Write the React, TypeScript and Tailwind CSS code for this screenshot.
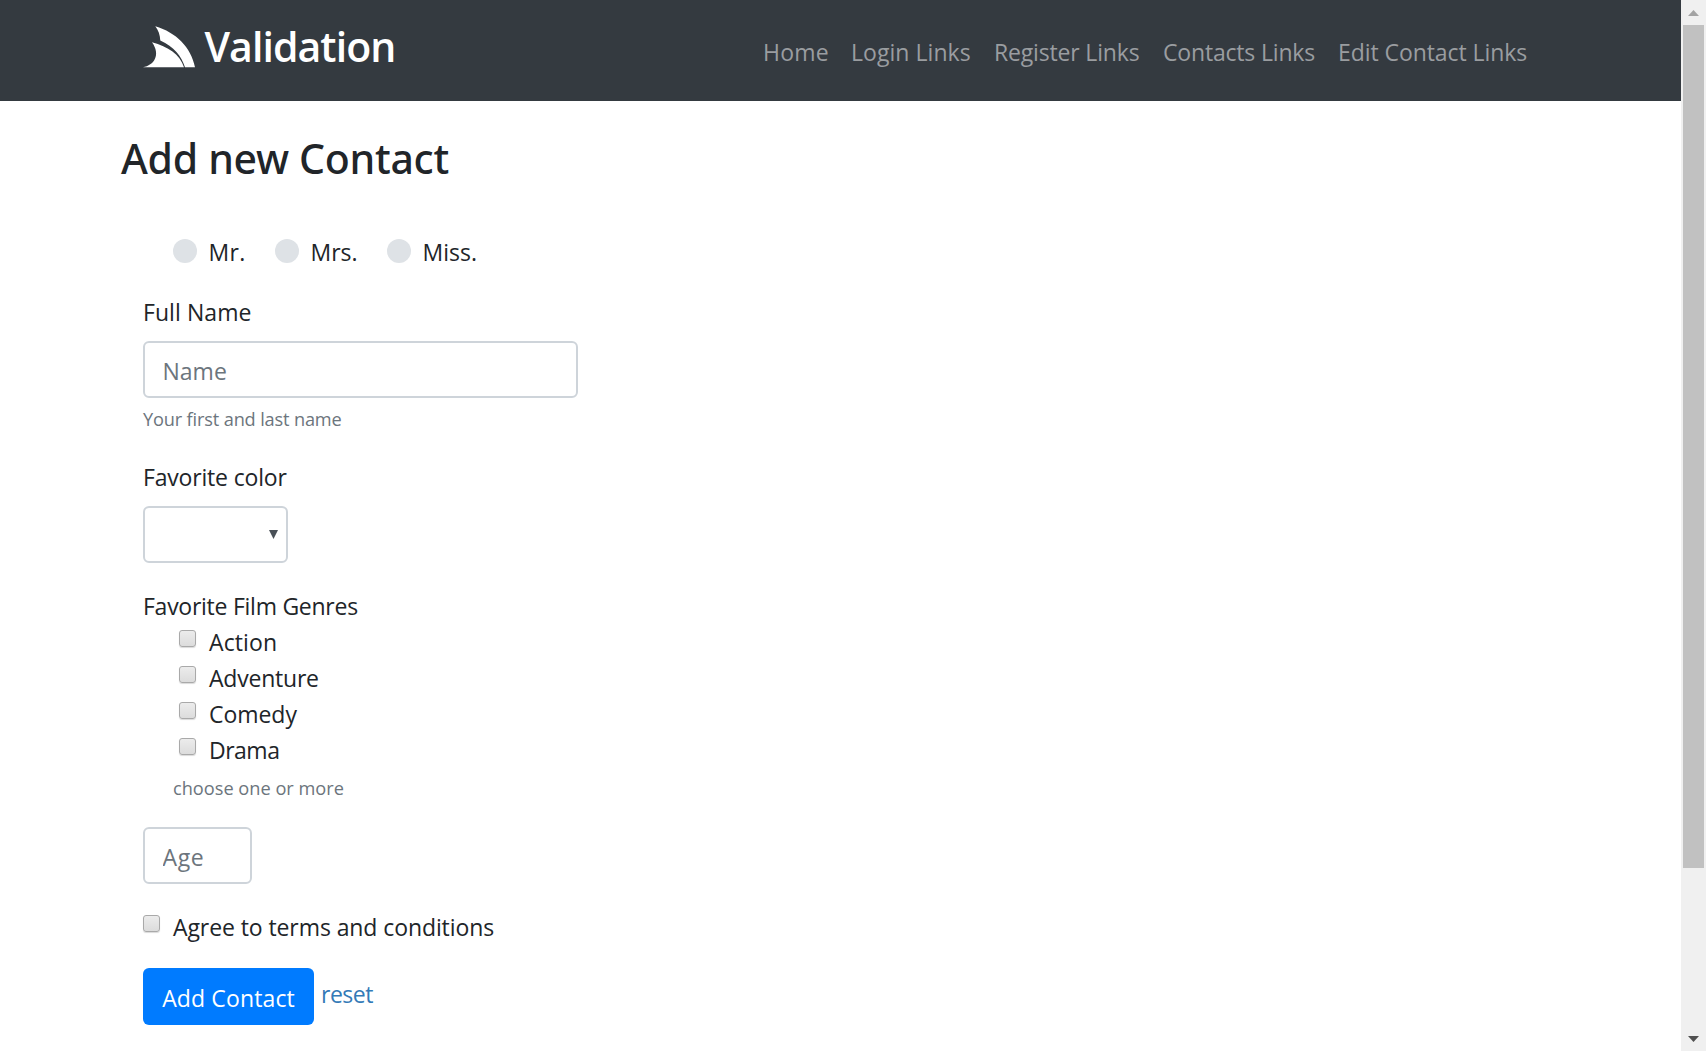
import type { ReactNode } from "react";

function Logo() {
  return (
    <svg className="mt-[26px] h-[42px] w-[53px] shrink-0" viewBox="0 0 53 42" fill="#fff">
      <path d="M12.3.3C33 6.500 48 21 52 41.300H42C38.500 30 31 20.500 17.300 14.500 17 9 15.500 4.500 12.300.3Z" />
      <path d="M9 16.300C25 20.500 37 28.500 41 41.300H0C11 39.500 18 29 9 16.300Z" />
    </svg>
  );
}

function NavLink({ className, children }: { className: string; children: ReactNode }) {
  return (
    <a href="#" className={`whitespace-nowrap text-[23px] leading-9 text-[#9a9da0] ${className}`}>
      {children}
    </a>
  );
}

function Checkbox({ className }: { className: string }) {
  return (
    <input
      type="checkbox"
      className={`size-[17px] shrink-0 appearance-none rounded-[3px] border-[1.5px] border-[#a9a9a9] bg-linear-to-b from-[#ececec] to-[#dcdcdc] shadow-[0_1px_1px_rgba(0,0,0,0.15)] ${className}`}
    />
  );
}

function Radio({ label, className }: { label: string; className: string }) {
  return (
    <label className={`flex ${className}`}>
      <span className="mt-[5px] mr-[11.5px] size-6 shrink-0 rounded-full bg-[#dee2e6]" />
      {label}
    </label>
  );
}

const genres = [
  { name: "Action", spacing: "tracking-[0.1px]" },
  { name: "Adventure", spacing: "tracking-[-0.22px]" },
  { name: "Comedy", spacing: "tracking-[-0.04px]" },
  { name: "Drama", spacing: "tracking-[-0.5px]" },
];

const field =
  "block h-[57px] rounded-md border-2 border-[#ced4da] bg-white pt-[9px] pb-[6px] pl-[17.5px] text-[23px] leading-9 placeholder:text-[#6c757d] placeholder:opacity-100";

export default function App() {
  return (
    <div className="flex h-[1051px] overflow-hidden bg-white font-['Open_Sans','Noto_Sans',sans-serif] text-[#212529]">
      <div className="min-w-0 flex-1">
        <header className="flex h-[101px] bg-[#343a40] pl-[143px]">
          <a href="#" className="flex text-white">
            <Logo />
            <span className="mt-[21px] ml-[8.5px] text-[41px] leading-[50px] font-semibold tracking-[-0.94px]">
              Validation
            </span>
          </a>
          <nav className="mt-[34px] mr-[153px] ml-auto flex">
            <NavLink className="w-[88px] tracking-[0.2px]">Home</NavLink>
            <NavLink className="w-[143px] tracking-[0.05px]">Login Links</NavLink>
            <NavLink className="w-[169px] tracking-[-0.17px]">Register Links</NavLink>
            <NavLink className="w-[175px] tracking-[-0.18px]">Contacts Links</NavLink>
            <NavLink className="w-[190px] tracking-[-0.07px]">Edit Contact Links</NavLink>
          </nav>
        </header>

        <main className="pl-[121px]">
          <h2 className="mt-8 font-['Noto_Sans',sans-serif] text-[41px] leading-[50px] font-medium tracking-[-0.3px]">
            Add new Contact
          </h2>

          <form className="pl-[22px] text-[23px] leading-9">
            <div className="mt-[51px] flex pl-[30px]">
              <Radio label="Mr." className="w-[102px] tracking-[0.3px]" />
              <Radio label="Mrs." className="w-[112px]" />
              <Radio label="Miss." className="" />
            </div>

            <label className="mt-6 block tracking-[0.07px]">Full Name</label>
            <input placeholder="Name" className={`${field} mt-[11px] w-[435px]`} />
            <small className="mt-[7px] block text-[18.2px] leading-[29px] tracking-[-0.16px] text-[#6c757d]">
              Your first and last name
            </small>

            <label className="mt-[25px] block tracking-[-0.18px]">Favorite color</label>
            <button
              type="button"
              className="mt-[11px] flex h-[57px] w-[145px] items-start justify-end rounded-md border-2 border-[#ced4da] bg-white pt-[22px] pr-2"
            >
              <svg className="h-[9px] w-[9px]" viewBox="0 0 9 9" fill="#495057">
                <path d="M0 0H9L4.500 9Z" />
              </svg>
            </button>

            <div className="mt-[25px] tracking-[-0.26px]">Favorite Film Genres</div>
            <div className="pl-9">
              {genres.map(({ name, spacing }) => (
                <label key={name} className={`flex h-9 ${spacing}`}>
                  <Checkbox className="mt-[6px] mr-[13px]" />
                  {name}
                </label>
              ))}
            </div>
            <small className="mt-[6px] ml-[30px] block text-[18.2px] leading-[29px] text-[#6c757d]">
              choose one or more
            </small>

            <input placeholder="Age" className={`${field} mt-[24px] w-[109px] tracking-[0.6px]`} />

            <label className="mt-[25px] flex tracking-[-0.09px]">
              <Checkbox className="mt-[6px] mr-[13px]" />
              Agree to terms and conditions
            </label>

            <div className="mt-[23px] flex">
              <button
                type="button"
                className="h-[57px] w-[171px] rounded-md bg-[#007bff] pt-[12px] pb-[9px] leading-9 tracking-[0.13px] text-white"
              >
                Add Contact
              </button>
              <a href="#" className="mt-[8px] ml-[7px] tracking-[-0.5px] text-[#337ab7]">
                reset
              </a>
            </div>
          </form>
        </main>
      </div>

      <div className="flex w-[25px] shrink-0 flex-col items-center bg-[#f0f0f0]">
        <svg className="mt-[10px] h-[6px] w-[11px]" viewBox="0 0 11 6" fill="#a3a3a3">
          <path d="M0 6L5.500 0 11 6Z" />
        </svg>
        <div className="mt-[9px] h-[843px] w-[21px] bg-[#c1c1c1]" />
        <svg className="mt-auto mb-[9px] h-[6px] w-[11px]" viewBox="0 0 11 6" fill="#505050">
          <path d="M0 0H11L5.500 6Z" />
        </svg>
      </div>
    </div>
  );
}
